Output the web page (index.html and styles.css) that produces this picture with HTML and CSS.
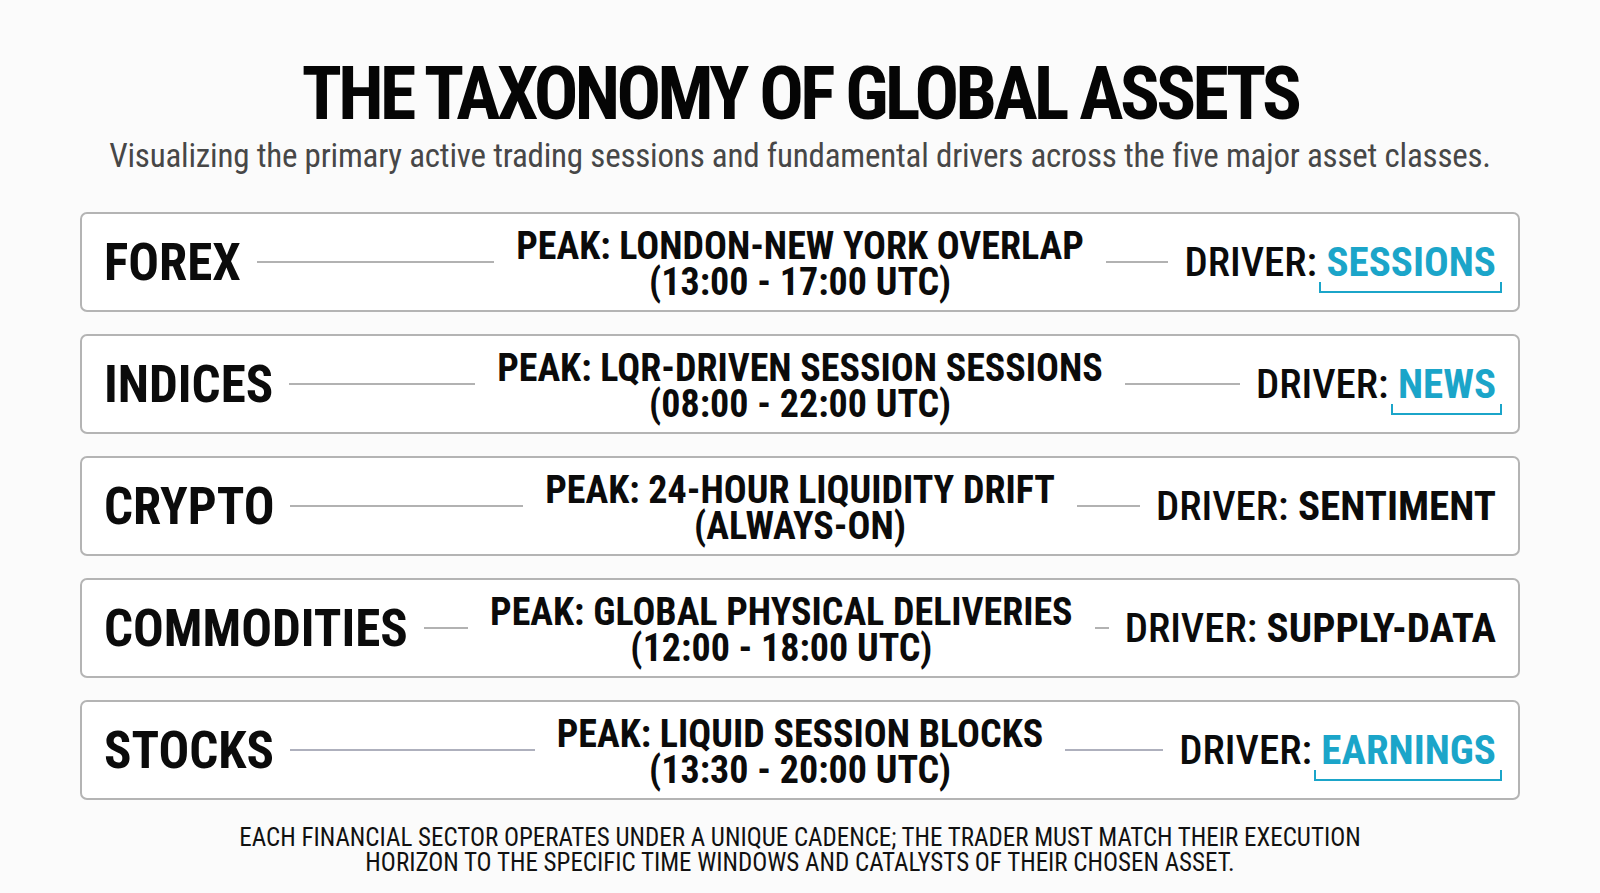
FILE: index.html
```html
<!DOCTYPE html>
<html lang="en">
<head>
<meta charset="utf-8">
<title>The Taxonomy of Global Assets</title>
<link rel="stylesheet" href="styles.css">
</head>
<body>
<main class="page">
  <header class="head">
    <h1 class="title">THE TAXONOMY OF GLOBAL ASSETS</h1>
    <p class="subtitle">Visualizing the primary active trading sessions and fundamental drivers across the five major asset classes.</p>
  </header>

  <section class="rows">
    <div class="row">
      <div class="side side-left"><span class="label">FOREX</span><span class="rule"></span></div>
      <div class="peak"><span class="peak-line">PEAK: LONDON-NEW YORK OVERLAP</span><span class="peak-line">(13:00 - 17:00 UTC)</span></div>
      <div class="side side-right"><span class="rule"></span><span class="driver">DRIVER: <span class="value accent">SESSIONS</span></span></div>
    </div>
    <div class="row">
      <div class="side side-left"><span class="label">INDICES</span><span class="rule"></span></div>
      <div class="peak"><span class="peak-line">PEAK: LQR-DRIVEN SESSION SESSIONS</span><span class="peak-line">(08:00 - 22:00 UTC)</span></div>
      <div class="side side-right"><span class="rule"></span><span class="driver">DRIVER: <span class="value accent">NEWS</span></span></div>
    </div>
    <div class="row">
      <div class="side side-left"><span class="label">CRYPTO</span><span class="rule"></span></div>
      <div class="peak"><span class="peak-line">PEAK: 24-HOUR LIQUIDITY DRIFT</span><span class="peak-line">(ALWAYS-ON)</span></div>
      <div class="side side-right"><span class="rule"></span><span class="driver">DRIVER: <span class="value">SENTIMENT</span></span></div>
    </div>
    <div class="row">
      <div class="side side-left"><span class="label">COMMODITIES</span><span class="rule"></span></div>
      <div class="peak"><span class="peak-line">PEAK: GLOBAL PHYSICAL DELIVERIES</span><span class="peak-line">(12:00 - 18:00 UTC)</span></div>
      <div class="side side-right"><span class="rule"></span><span class="driver">DRIVER: <span class="value">SUPPLY-DATA</span></span></div>
    </div>
    <div class="row">
      <div class="side side-left"><span class="label">STOCKS</span><span class="rule rule-cool"></span></div>
      <div class="peak"><span class="peak-line">PEAK: LIQUID SESSION BLOCKS</span><span class="peak-line">(13:30 - 20:00 UTC)</span></div>
      <div class="side side-right"><span class="rule rule-cool"></span><span class="driver">DRIVER: <span class="value accent">EARNINGS</span></span></div>
    </div>
  </section>

  <footer class="foot">EACH FINANCIAL SECTOR OPERATES UNDER A UNIQUE CADENCE; THE TRADER MUST MATCH THEIR EXECUTION<br>HORIZON TO THE SPECIFIC TIME WINDOWS AND CATALYSTS OF THEIR CHOSEN ASSET.</footer>
</main>
</body>
</html>
```

FILE: styles.css
```css
* { box-sizing: border-box; }

html, body {
  margin: 0;
  padding: 0;
  background: #fbfbfb;
}

body {
  font-family: "Roboto Condensed", Roboto, "Liberation Sans", sans-serif;
  font-stretch: condensed;
  color: #0b0b0b;
  width: 1600px;
  height: 893px;
  overflow: hidden;
}

.page {
  padding: 57px 80px 0;
  display: flex;
  flex-direction: column;
}

.head {
  display: flex;
  flex-direction: column;
  align-items: center;
}

.title {
  margin: 0;
  font-size: 74px;
  line-height: 74px;
  font-weight: 700;
  letter-spacing: -3.6px;
  color: #050505;
}

.subtitle {
  margin: 5px 0 0;
  font-size: 33px;
  line-height: 40px;
  font-weight: 400;
  letter-spacing: -0.2px;
  color: #474747;
}

.rows {
  margin-top: 36px;
  display: flex;
  flex-direction: column;
  gap: 22px;
}

.row {
  height: 100px;
  background: #ffffff;
  border: 2px solid #b4b4b4;
  border-radius: 7px;
  padding: 0 22px;
  display: grid;
  grid-template-columns: 1fr auto 1fr;
  align-items: center;
  column-gap: 22px;
}

.side {
  display: flex;
  align-items: center;
  gap: 16px;
}

.label {
  font-size: 51px;
  font-weight: 700;
  line-height: 1;
  white-space: nowrap;
}

.rule {
  flex: 1;
  min-width: 14px;
  height: 2px;
  background: #b2b2b2;
}

.rule-cool {
  background: #aeb0bd;
}

.peak {
  display: flex;
  flex-direction: column;
  align-items: center;
  font-size: 38px;
  font-weight: 700;
  white-space: nowrap;
  padding-top: 4px;
}

.peak-line {
  display: block;
  height: 36px;
  line-height: 36px;
}

.driver {
  font-size: 41px;
  line-height: 1;
  font-weight: 500;
  white-space: nowrap;
}

.value {
  position: relative;
  display: inline-block;
  font-weight: 700;
}

.accent {
  color: #1ba5c9;
}

.accent::after {
  content: "";
  position: absolute;
  left: -7px;
  right: -6px;
  bottom: -10px;
  height: 9px;
  border: 2.5px solid #1ba5c9;
  border-top: none;
}

.foot {
  margin-top: 25px;
  text-align: center;
  font-size: 25px;
  line-height: 25px;
  font-weight: 400;
  color: #111111;
}
```
